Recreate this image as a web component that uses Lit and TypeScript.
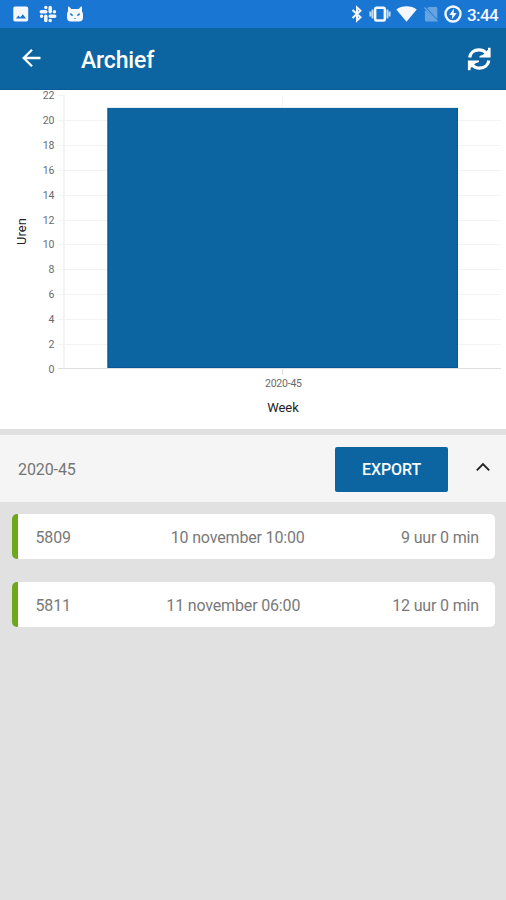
import { LitElement, html, svg, css } from "lit";
import { customElement, property } from "lit/decorators.js";

interface Entry {
  id: string;
  start: string;
  duration: string;
}

const ENTRIES: Entry[] = [
  { id: "5809", start: "10 november 10:00", duration: "9 uur 0 min" },
  { id: "5811", start: "11 november 06:00", duration: "12 uur 0 min" },
];

@customElement("status-bar")
export class StatusBar extends LitElement {
  static styles = css`
    :host {
      display: flex;
      justify-content: space-between;
      align-items: center;
      box-sizing: border-box;
      height: 28px;
      padding: 0 8px 0 12px;
      background: #1976d2;
      color: #f4f8fd;
    }
    .group {
      display: flex;
      align-items: center;
    }
    .left {
      gap: 9px;
    }
    svg {
      display: block;
      fill: currentColor;
    }
    .bluetooth { margin-right: 6px; }
    .vibrate { margin-right: 5px; }
    .wifi { margin-right: 7px; }
    .sim { margin-right: 6px; opacity: 0.35; }
    .battery { margin-right: 5px; }
    .time {
      font-size: 17px;
      line-height: 28px;
      font-weight: 500;
      width: 31px;
      padding-top: 1px;
      letter-spacing: -0.6px;
      white-space: nowrap;
    }
  `;

  render() {
    return html`
      <div class="group left">
        <svg width="18" height="18" viewBox="0 0 18 18">
          <path fill-rule="evenodd" d="M3 1.500h11.500a1.700 1.700 0 0 1 1.700 1.700v11.600a1.700 1.700 0 0 1-1.700 1.700H3a1.700 1.700 0 0 1-1.700-1.700V3.200A1.700 1.700 0 0 1 3 1.500zM4 13.500h10l-3.200-4.300-2.600 3.300-1.800-2.100z" />
        </svg>
        <svg width="18" height="18" viewBox="0 0 18 18">
          <g fill="none" stroke="currentColor" stroke-width="3.500" stroke-linecap="round">
            <path d="M6.800 6.800H2.300M11.200 2.400v4.400M11.200 11.200h4.500M6.800 11.200v4.400" />
            <path d="M6.800 2.600h.01M15.400 6.800h.01M11.200 15.400h.01M2.600 11.200h.01" />
          </g>
        </svg>
        <svg width="18" height="18" viewBox="0 0 18 18">
          <path fill-rule="evenodd" d="M2 2C2 1.300 2.700 1.200 3.300 1.800l2 2.200h7.400l2-2.200c.6-.6 1.300-.5 1.300.2v4.500c.7.700 1 1.900 1 3.500v2.500c0 2.700-1.300 4-4 4H5c-2.700 0-4-1.300-4-4V10c0-1.600.3-2.800 1-3.500zM4 8.300c0 1.800 1 2.800 2.900 2.800.2-1.500-.9-2.600-2.900-2.800zM14 8.300c-2 .2-3.100 1.300-2.900 2.800 1.900 0 2.900-1 2.900-2.800zM7.800 13l1.200 1.100L10.200 13z" />
        </svg>
      </div>
      <div class="group">
        <svg class="bluetooth" width="12" height="18" viewBox="0 0 12 18">
          <path fill="none" stroke="currentColor" stroke-width="2" d="M1.500 5l8 7.300L6 15.500v-13l3.500 3.200-8 7.300" />
        </svg>
        <svg class="vibrate" width="22" height="16" viewBox="0 0 22 16">
          <rect x="6.200" y="1.700" width="9.600" height="12.800" rx="1.300" fill="none" stroke="currentColor" stroke-width="2.400" />
          <path fill="none" stroke="currentColor" stroke-width="2" opacity=".75" d="M3.600 3.500v9M18.400 3.500v9M1.400 5.500v5M20.600 5.500v5" />
        </svg>
        <svg class="wifi" width="21" height="16" viewBox="0 0 21 16">
          <path d="M10.500 15.800L.3 3.500C6-.8 15-.8 20.700 3.500z" />
        </svg>
        <svg class="sim" width="14" height="16" viewBox="0 0 14 16">
          <path d="M4.500 1H12a1.300 1.300 0 0 1 1.300 1.300v11L3.300 2.200zM2 4.200l11 11.300H2A1.200 1.200 0 0 1 .9 14.300V5.500z" />
          <path fill="none" stroke="currentColor" stroke-width="1.500" d="M.5 1.500l13 14" />
        </svg>
        <svg class="battery" width="18" height="18" viewBox="0 0 18 18">
          <circle cx="9" cy="9" r="7.500" fill="none" stroke="currentColor" stroke-width="2.400" />
          <path d="M10 3.600L5.300 10h3l-.5 4.500L12.700 8H9.600z" />
        </svg>
        <span class="time">3:44</span>
      </div>
    `;
  }
}

@customElement("title-bar")
export class TitleBar extends LitElement {
  static styles = css`
    :host {
      display: flex;
      align-items: center;
      box-sizing: border-box;
      height: 62px;
      padding: 0 14px 0 22px;
      background: #0c64a1;
      border-bottom: 1px solid #0a5a98;
      color: #fff;
    }
    svg {
      display: block;
    }
    .title {
      flex: 1;
      margin: 4px 0 0 39px;
      font-size: 23px;
      line-height: 30px;
      font-weight: 500;
      letter-spacing: -0.15px;
    }
    .back {
      margin-top: -1px;
    }
  `;

  render() {
    return html`
      <svg class="back" width="20" height="20" viewBox="0 0 20 20">
        <path fill="none" stroke="currentColor" stroke-width="2.300" d="M18.500 10H2.500M10 1.700L1.700 10l8.300 8.300" />
      </svg>
      <div class="title">Archief</div>
      <svg width="26" height="26" viewBox="0 0 26 26">
        <g fill="none" stroke="currentColor" stroke-width="3.200">
          <path d="M3.700 11.500C4.300 6.800 8 3.900 12.800 3.900c3.500 0 6 1.300 8 3.700" />
          <path d="M22.800 14.500c-.6 4.700-4.300 7.600-9.100 7.600-3.500 0-6-1.300-8-3.700" />
        </g>
        <path fill="currentColor" d="M24.600 1.800v9.800H13.500V10l3.500-1.200 5-5V1.800zM1.900 24.200v-9.800H13V16l-3.500 1.200-5 5v2z" />
      </svg>
    `;
  }
}

@customElement("hours-chart")
export class HoursChart extends LitElement {
  @property() week = "";
  @property({ type: Number }) hours = 0;

  static styles = css`
    :host {
      display: block;
      height: 339px;
      background: #fff;
    }
    svg {
      display: block;
    }
    .grid { stroke: #f3f3f3; }
    .axis { stroke: #f3f3f3; stroke-width: 2; }
    .base { stroke: #dedede; }
    .bar { fill: #0c64a1; }
    .edge { fill: none; stroke: #07569a; }
    .tick { fill: #6a6a6a; font-size: 10.5px; }
    .label { fill: #222; font-size: 13px; }
  `;

  render() {
    const bottom = 278.5;
    const y = (v: number) => bottom - v * 12.41;
    const ticks = Array.from({ length: 12 }, (_, i) => i * 2);
    const top = y(this.hours);
    return html`
      <svg width="506" height="339" viewBox="0 0 506 339">
        ${ticks.slice(1, 11).map((v) => svg`<line class="grid" x1="58" x2="501" y1=${Math.round(y(v)) + 0.5} y2=${Math.round(y(v)) + 0.5} />`)}
        <line class="grid" x1="58" x2="64" y1="5.5" y2="5.5" />
        <line class="grid" x1="282.5" x2="282.5" y1="5" y2="18" />
        <line class="axis" x1="64" x2="64" y1="5" y2="278" />
        <line class="base" x1="58" x2="501" y1="278.5" y2="278.5" />
        <line class="base" x1="282.5" x2="282.5" y1="278" y2="285" />
        <rect class="bar" x="107.5" y=${top} width="350.5" height=${278 - top} />
        <path class="edge" d="M108 ${top}V277.5H457.5V${top}" />
        ${ticks.map((v) => svg`<text class="tick" x="54.5" y=${y(v) + 4} text-anchor="end">${v}</text>`)}
        <text class="tick" x="283.5" y="296.5" text-anchor="middle" textLength="37">${this.week}</text>
        <text class="label" x="283" y="322" text-anchor="middle">Week</text>
        <text class="label" transform="translate(26 141.5) rotate(-90)" text-anchor="middle">Uren</text>
      </svg>
    `;
  }
}

@customElement("week-header")
export class WeekHeader extends LitElement {
  @property() week = "";

  static styles = css`
    :host {
      display: flex;
      align-items: center;
      box-sizing: border-box;
      height: 67px;
      padding: 0 16px 0 18px;
      background: #f5f5f5;
      color: #757575;
    }
    .week {
      flex: 1;
      font-size: 16px;
      letter-spacing: -0.1px;
      padding-top: 2px;
    }
    .export {
      width: 113px;
      height: 45px;
      margin: 1px 28px 0 0;
      padding: 1px 0 0;
      border: 0;
      border-radius: 2px;
      background: #0c64a1;
      color: #f6fafd;
      font: 500 16px/44px Roboto, sans-serif;
      letter-spacing: -0.1px;
      text-align: center;
    }
    svg {
      display: block;
      margin-top: -3px;
    }
  `;

  render() {
    return html`
      <div class="week">${this.week}</div>
      <button class="export">EXPORT</button>
      <svg width="14" height="10" viewBox="0 0 14 10">
        <path fill="none" stroke="#222" stroke-width="1.900" d="M.8 8.300L7 2.100l6.200 6.200" />
      </svg>
    `;
  }
}

@customElement("app-root")
export class AppRoot extends LitElement {
  static styles = css`
    :host {
      display: flex;
      flex-direction: column;
      width: 506px;
      height: 900px;
      overflow: hidden;
      background: #e1e1e1;
      font-family: Roboto, sans-serif;
    }
    week-header {
      margin-top: 6px;
    }
    .list {
      display: flex;
      flex-direction: column;
      gap: 23px;
      padding: 12px 11px 0 12px;
    }
    .entry {
      display: flex;
      justify-content: space-between;
      align-items: center;
      box-sizing: border-box;
      height: 45px;
      padding: 2px 16px 0 17.5px;
      border-left: 6px solid #6ea91d;
      border-radius: 5px;
      background: #fff;
      color: #797979;
      font-size: 16px;
      letter-spacing: -0.16px;
    }
    .start {
      padding-left: 3.5px;
    }
  `;

  render() {
    return html`
      <status-bar></status-bar>
      <title-bar></title-bar>
      <hours-chart week="2020-45" .hours=${21}></hours-chart>
      <week-header week="2020-45"></week-header>
      <div class="list">
        ${ENTRIES.map(
          (e) => html`
            <div class="entry">
              <span>${e.id}</span>
              <span class="start">${e.start}</span>
              <span>${e.duration}</span>
            </div>
          `,
        )}
      </div>
    `;
  }
}
